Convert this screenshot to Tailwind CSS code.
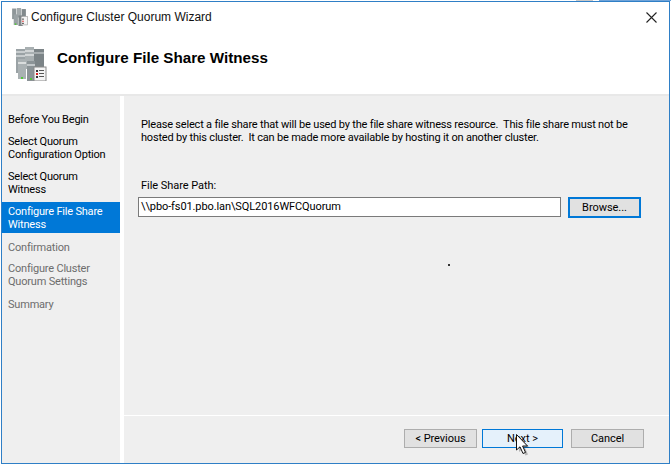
<!DOCTYPE html>
<html lang="en">
<head>
    <meta charset="UTF-8">
    <title>Configure Cluster Quorum Wizard</title>
    <script src="https://cdn.jsdelivr.net/npm/@tailwindcss/browser@4"></script>
</head>
<body class="bg-white overflow-hidden">
<div class="relative w-[671px] h-[465px] p-px font-['Roboto',sans-serif] text-[11px] leading-[13px] tracking-[-0.05px] text-black">

    <!-- Bits of the desktop showing above the window -->
    <div class="absolute left-[576px] top-0 w-[17px] h-px bg-[#c8c8c8]"></div>
    <div class="absolute left-[599px] top-0 w-[72px] h-px bg-[#6fa3d8]"></div>

    <!-- Window -->
    <div class="w-[669px] h-[463px] border border-[#2f7fc6] bg-white flex flex-col">

        <!-- Title bar -->
        <div class="h-[30px] shrink-0 flex items-center pl-[8px] pr-[12px] font-['Liberation_Sans',sans-serif] text-[12px] tracking-normal">
            <svg width="18" height="18" viewBox="0 0 34 34" class="mr-[3px]">
                <rect x="4" y="1" width="8" height="20" fill="#8e9699"/>
                <rect x="13" y="0" width="8" height="18" fill="#a3aaac"/>
                <rect x="22" y="2" width="8" height="14" fill="#81898c"/>
                <rect x="7" y="12" width="8" height="20" fill="#9aa2a5"/>
                <rect x="16" y="14" width="8" height="20" fill="#7f878a"/>
                <rect x="21" y="16" width="12" height="16" fill="#f4f4f4" stroke="#8a8a8a"/>
                <rect x="23" y="20" width="3" height="2" fill="#333"/>
                <rect x="23" y="24" width="3" height="2" fill="#d22"/>
                <rect x="23" y="28" width="3" height="2" fill="#333"/>
                <rect x="9" y="29" width="3" height="3" fill="#53c639"/>
            </svg>
            <span class="text-[#111]">Configure Cluster Quorum Wizard</span>
            <svg width="11" height="11" viewBox="0 0 11 11" class="ml-auto" stroke="#222" stroke-width="1.1" fill="none">
                <path d="M0.5 0.5 L10.5 10.5 M10.5 0.5 L0.5 10.5"/>
            </svg>
        </div>

        <!-- Header -->
        <div class="h-[64px] shrink-0 flex items-start pl-[11px] border-b-[2px] border-[#e8e8e8]">
            <svg width="34" height="34" viewBox="0 0 34 34" class="mt-[15px]">
                <rect x="3" y="2" width="9" height="24" fill="#9aa2a5"/>
                <rect x="3" y="4" width="9" height="2" fill="#c8cdcf"/>
                <rect x="3" y="8" width="9" height="2" fill="#c8cdcf"/>
                <rect x="12" y="0" width="9" height="22" fill="#a9b0b2"/>
                <rect x="12" y="3" width="9" height="2" fill="#d2d6d7"/>
                <rect x="12" y="7" width="9" height="2" fill="#d2d6d7"/>
                <rect x="21" y="2" width="10" height="20" fill="#7c8487"/>
                <rect x="21" y="5" width="10" height="2" fill="#a8aeb0"/>
                <rect x="5" y="12" width="8" height="20" fill="#aab1b3"/>
                <rect x="5" y="15" width="8" height="2" fill="#dadddd"/>
                <rect x="14" y="14" width="8" height="20" fill="#8b9396"/>
                <rect x="14" y="17" width="8" height="2" fill="#c3c8ca"/>
                <rect x="21" y="20" width="12" height="14" fill="#f4f4f4" stroke="#8a8a8a"/>
                <rect x="23" y="23" width="2" height="2" fill="#333"/>
                <rect x="26" y="23" width="5" height="1" fill="#555"/>
                <rect x="23" y="26" width="2" height="2" fill="#d22"/>
                <rect x="26" y="26" width="5" height="1" fill="#555"/>
                <rect x="23" y="29" width="2" height="2" fill="#333"/>
                <rect x="26" y="29" width="5" height="1" fill="#555"/>
                <rect x="8" y="30" width="2" height="2" fill="#53c639"/>
                <rect x="17" y="31" width="2" height="2" fill="#53c639"/>
            </svg>
            <h1 class="ml-[10px] mt-[17px] font-['Liberation_Sans',sans-serif] tracking-normal text-[15.2px] leading-[17px] font-bold">Configure File Share Witness</h1>
        </div>

        <!-- Body -->
        <div class="flex flex-1 min-h-0">

            <!-- Steps -->
            <div class="w-[118px] shrink-0 bg-[#efefef] pt-[17px] flex flex-col whitespace-nowrap tracking-[-0.2px]">
                <div class="px-[6px] h-[22px]">Before You Begin</div>
                <div class="px-[6px] h-[35px]">Select Quorum<br>Configuration Option</div>
                <div class="px-[6px] h-[32px]">Select Quorum<br>Witness</div>
                <div class="px-[6px] pt-[3px] h-[31px] bg-[#0078d7] text-white">Configure File Share<br>Witness</div>
                <div class="px-[6px] pt-[8px] h-[29px] text-[#6d6d6d]">Confirmation</div>
                <div class="px-[6px] h-[36px] text-[#6d6d6d]">Configure Cluster<br>Quorum Settings</div>
                <div class="px-[6px] text-[#6d6d6d]">Summary</div>
            </div>
            <div class="w-[4px] shrink-0 bg-white"></div>

            <!-- Page -->
            <div class="flex-1 bg-[#efefef] flex flex-col">
                <div class="flex-1 pl-[14px] pr-[14px] pt-[22px] border-b border-white">
                    <p class="pl-[3px] whitespace-pre tracking-[-0.19px]">Please select a file share that will be used by the file share witness resource.  This file share must not be
hosted by this cluster.  It can be made more available by hosting it on another cluster.</p>
                    <div class="pl-[3px] mt-[35px]">File Share Path:</div>
                    <div class="flex mt-[5px]">
                        <div class="w-[423px] h-[20px] border border-[#7a7a7a] bg-white pl-[2px] leading-[18px] tracking-[-0.1px]">\\pbo-fs01.pbo.lan\SQL2016WFCQuorum</div>
                        <button class="ml-[7px] w-[73px] h-[21px] border-[2px] border-[#0078d7] bg-[#e1e1e1]">Browse...</button>
                    </div>
                </div>
                <div class="h-[47px] shrink-0 flex items-start pt-[13px] pl-[280px]">
                    <button class="w-[73px] h-[19px] border border-[#adadad] bg-[#e1e1e1]">&lt; Previous</button>
                    <button class="ml-[5px] w-[81px] h-[19px] border border-[#0078d7] bg-[#e5f1fb]">Next &gt;</button>
                    <button class="ml-[8px] w-[73px] h-[19px] border border-[#adadad] bg-[#e1e1e1]">Cancel</button>
                </div>
            </div>
        </div>
    </div>

    <!-- Stray dot on the page -->
    <div class="absolute left-[448px] top-[264px] w-[2px] h-[2px] bg-[#333]"></div>

    <!-- Mouse cursor -->
    <svg class="absolute left-[515px] top-[434px]" width="16" height="23" viewBox="0 0 16 23">
        <path d="M4 3 V18 L7.5 15 L10.5 21.5 L13 20.4 L10.1 14 H15 Z" fill="#000" opacity="0.25"/>
        <path d="M1.5 0.5 V16 L5 12.8 L8 19.5 L10.5 18.4 L7.6 12 H12.5 Z" fill="#fff" stroke="#111" stroke-width="1"/>
    </svg>
</div>
</body>
</html>
